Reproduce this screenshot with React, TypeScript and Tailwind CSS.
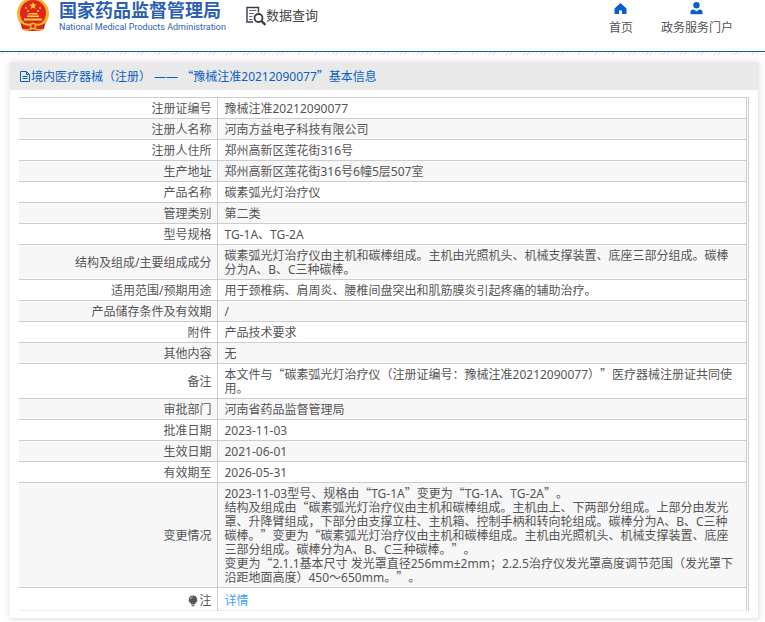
import React from 'react';

const RECORD_NO = '豫械注准20212090077';

const ROWS: { label: string; value: string[] }[] = [
  { label: '注册证编号', value: [RECORD_NO] },
  { label: '注册人名称', value: ['河南方益电子科技有限公司'] },
  { label: '注册人住所', value: ['郑州高新区莲花街316号'] },
  { label: '生产地址', value: ['郑州高新区莲花街316号6幢5层507室'] },
  { label: '产品名称', value: ['碳素弧光灯治疗仪'] },
  { label: '管理类别', value: ['第二类'] },
  { label: '型号规格', value: ['TG-1A、TG-2A'] },
  {
    label: '结构及组成/主要组成成分',
    value: ['碳素弧光灯治疗仪由主机和碳棒组成。主机由光照机头、机械支撑装置、底座三部分组成。碳棒分为A、B、C三种碳棒。'],
  },
  { label: '适用范围/预期用途', value: ['用于颈椎病、肩周炎、腰椎间盘突出和肌筋膜炎引起疼痛的辅助治疗。'] },
  { label: '产品储存条件及有效期', value: ['/'] },
  { label: '附件', value: ['产品技术要求'] },
  { label: '其他内容', value: ['无'] },
  {
    label: '备注',
    value: ['本文件与“碳素弧光灯治疗仪（注册证编号：豫械注准20212090077）”医疗器械注册证共同使用。'],
  },
  { label: '审批部门', value: ['河南省药品监督管理局'] },
  { label: '批准日期', value: ['2023-11-03'] },
  { label: '生效日期', value: ['2021-06-01'] },
  { label: '有效期至', value: ['2026-05-31'] },
  {
    label: '变更情况',
    value: [
      '2023-11-03型号、规格由“TG-1A”变更为“TG-1A、TG-2A”。',
      '结构及组成由“碳素弧光灯治疗仪由主机和碳棒组成。主机由上、下两部分组成。上部分由发光罩、升降臂组成，下部分由支撑立柱、主机箱、控制手柄和转向轮组成。碳棒分为A、B、C三种碳棒。”变更为“碳素弧光灯治疗仪由主机和碳棒组成。主机由光照机头、机械支撑装置、底座三部分组成。碳棒分为A、B、C三种碳棒。”。',
      '变更为“2.1.1基本尺寸 发光罩直径256mm±2mm；2.2.5治疗仪发光罩高度调节范围（发光罩下沿距地面高度）450～650mm。”。',
    ],
  },
];

// Curly quotes need the CJK face to get their full-width form
const CjkText: React.FC<{ text: string }> = ({ text }) => (
  <>
    {text.split(/([“”])/).map((part, idx) =>
      part === '“' || part === '”' ? (
        <span key={idx} className="font-['Noto_Sans_CJK_SC',sans-serif] leading-none">{part}</span>
      ) : (
        part
      )
    )}
  </>
);

const Emblem: React.FC = () => (
  <svg width="34" height="34" viewBox="0 0 34 34" className="shrink-0" aria-hidden="true">
    <ellipse cx="17" cy="13.5" rx="16" ry="16" fill="#f2b632" />
    <ellipse cx="17" cy="13" rx="13" ry="13" fill="#e3241b" />
    <path d="M4 20 L10 25 H24 L30 20 L28 29 L22 31 H12 L6 29 Z" fill="#d9231c" />
    <path d="M17 2 l1 2.600 h2.800 l-2.200 1.700 .8 2.700 -2.400-1.600 -2.400 1.600 .8-2.700 -2.200-1.700 h2.800z" fill="#fbd33f" />
    <g fill="#fbd33f">
      <circle cx="10" cy="8" r="1" />
      <circle cx="12" cy="11" r="1" />
      <circle cx="22" cy="11" r="1" />
      <circle cx="24" cy="8" r="1" />
      <path d="M13 13h8l1 1.500H12zM11 15.500h12v1.500H11zM8 18.500h18v2H8z" />
    </g>
    <path d="M4 21q7 6 13 2.500q6 3.500 13 -2.500" fill="none" stroke="#f2b632" strokeWidth="1.800" />
    <path d="M7 29.500q5 1.500 10-1.500q5 3 10 1.500" fill="none" stroke="#f2b632" strokeWidth="1.500" />
    <circle cx="17" cy="26" r="2.600" fill="#e3241b" stroke="#f2b632" strokeWidth="1.500" />
  </svg>
);

const SearchDocIcon: React.FC = () => (
  <svg width="20" height="20" viewBox="0 0 20 20" fill="none" stroke="#3a3a4c" className="shrink-0" aria-hidden="true">
    <path d="M7 16H1V1.500H12.500v5" strokeWidth="1.400" />
    <path d="M3 4.500h7.500M3 7.500h5M3 10.500h3.500M3 13.500h3.500" stroke="#6d6d7a" />
    <circle cx="12.500" cy="12" r="4" strokeWidth="1.800" />
    <path d="M15.500 15l4 4" strokeWidth="2.400" />
  </svg>
);

const Header: React.FC = () => (
  <header className="h-[52px] flex items-start justify-between border-b border-[#0f5cb5] bg-white">
    <div className="flex items-start">
      <a href="#" className="flex items-start pl-4 text-[#2d5fb0]">
        <Emblem />
        <span className="pl-[9px] block">
          <span className="block text-[18px] leading-5 font-bold whitespace-nowrap">国家药品监督管理局</span>
          <span className="block pt-px text-[9px] leading-3 font-['Roboto'] whitespace-nowrap">
            National Medical Products Administration
          </span>
        </span>
      </a>
      <a href="#" className="flex items-start pl-5 pt-1.5 text-[13px] leading-[18px] text-[#444]">
        <SearchDocIcon />
        数据查询
      </a>
    </div>
    <nav className="flex gap-7 pr-8 text-xs leading-4 text-[#555]">
      <a href="#" className="flex flex-col items-center gap-[5px] pt-0.5">
        <svg width="13" height="13" viewBox="0 0 13 13" fill="#0a5fc4" aria-hidden="true">
          <path d="M6.500 1L.5 6.500V12H5V8.500h3V12h4.500V6.500z" />
        </svg>
        首页
      </a>
      <a href="#" className="flex flex-col items-center gap-[5px] pt-0.5">
        <svg width="13" height="13" viewBox="0 0 13 13" fill="#0a5fc4" aria-hidden="true">
          <circle cx="6.500" cy="3.200" r="3.200" />
          <path d="M.5 12.200V10q0-2.200 3-2.800L6.500 9.500l3-2.300q3 .6 3 2.800v2.200z" />
        </svg>
        政务服务门户
      </a>
    </nav>
  </header>
);

const App: React.FC = () => {
  return (
    <div className="bg-white text-xs text-[#555] font-['Noto_Sans','Noto_Sans_CJK_SC',sans-serif] [text-spacing-trim:space-all]">
      <Header />
      <div className="h-[3px] bg-[repeating-linear-gradient(135deg,#ffffff_0px,#ffffff_2px,#e6e6e6_2px,#e6e6e6_3px)]" />

      <main className="mt-[7px] ml-[10px] mr-1.5 mb-1 border-r border-b border-[#e9e9e9] shadow-[0_0_8px_rgba(0,0,0,0.12)]">
        <h1 className="h-7 flex items-center pt-0.5 pl-[10px] bg-[#e9e9e9] text-[#0a5fc4]">
          <svg width="11" height="12" viewBox="0 0 11 12" fill="none" stroke="#0a5fc4" className="shrink-0" aria-hidden="true">
            <path d="M.5 .5h6l3 3v7h-9zM6.500 .5v3h3M2.500 5.500h5M2.500 7.500h5" />
          </svg>
          <span className="whitespace-pre">
            <CjkText text={`境内医疗器械（注册） —— “${RECORD_NO}”基本信息`} />
          </span>
        </h1>

        <div className="mt-[7px] mb-[7px] mx-[9px] pr-px border-r border-[#ccc]">
          <table className="w-full table-fixed border-collapse leading-[14px] border-t border-r border-[#ccc]">
            <tbody>
              {ROWS.map((row) => (
                <tr key={row.label} className="border-b border-[#ccc] even:bg-[#f7f7f7]">
                  <th scope="row" className="w-[198px] pt-1 pb-0.5 pr-[5px] text-right font-normal border-r border-[#ccc]">
                    {row.label}
                  </th>
                  <td className="pt-1 pb-0.5 pl-[7px] pr-2">
                    {row.value.map((line) => (
                      <p key={line}>
                        <CjkText text={line} />
                      </p>
                    ))}
                  </td>
                </tr>
              ))}
              <tr className="border-b border-[#ebeef5]">
                <th scope="row" className="pt-1.5 pb-0.5 pr-[5px] text-right font-normal border-r border-[#ccc]">
                  <span className="flex items-center justify-end">
                    <svg width="10" height="12" viewBox="0 0 10 12" fill="#555" className="mr-px" aria-hidden="true">
                      <path d="M5 .5a4.200 4.200 0 0 1 2.500 7.600L6.500 9.500h-3L2.500 8.100A4.200 4.200 0 0 1 5 .5zM3.500 10.200h3v1h-3z" />
                      <path d="M2.500 4Q3 2.200 4.800 2" stroke="#fff" strokeWidth=".7" fill="none" />
                    </svg>
                    注
                  </span>
                </th>
                <td className="pt-1.5 pb-0.5 pl-[7px] pr-2">
                  <a href="#" className="text-[#409eff]">详情</a>
                </td>
              </tr>
            </tbody>
          </table>
        </div>
      </main>
    </div>
  );
};

export default App;
